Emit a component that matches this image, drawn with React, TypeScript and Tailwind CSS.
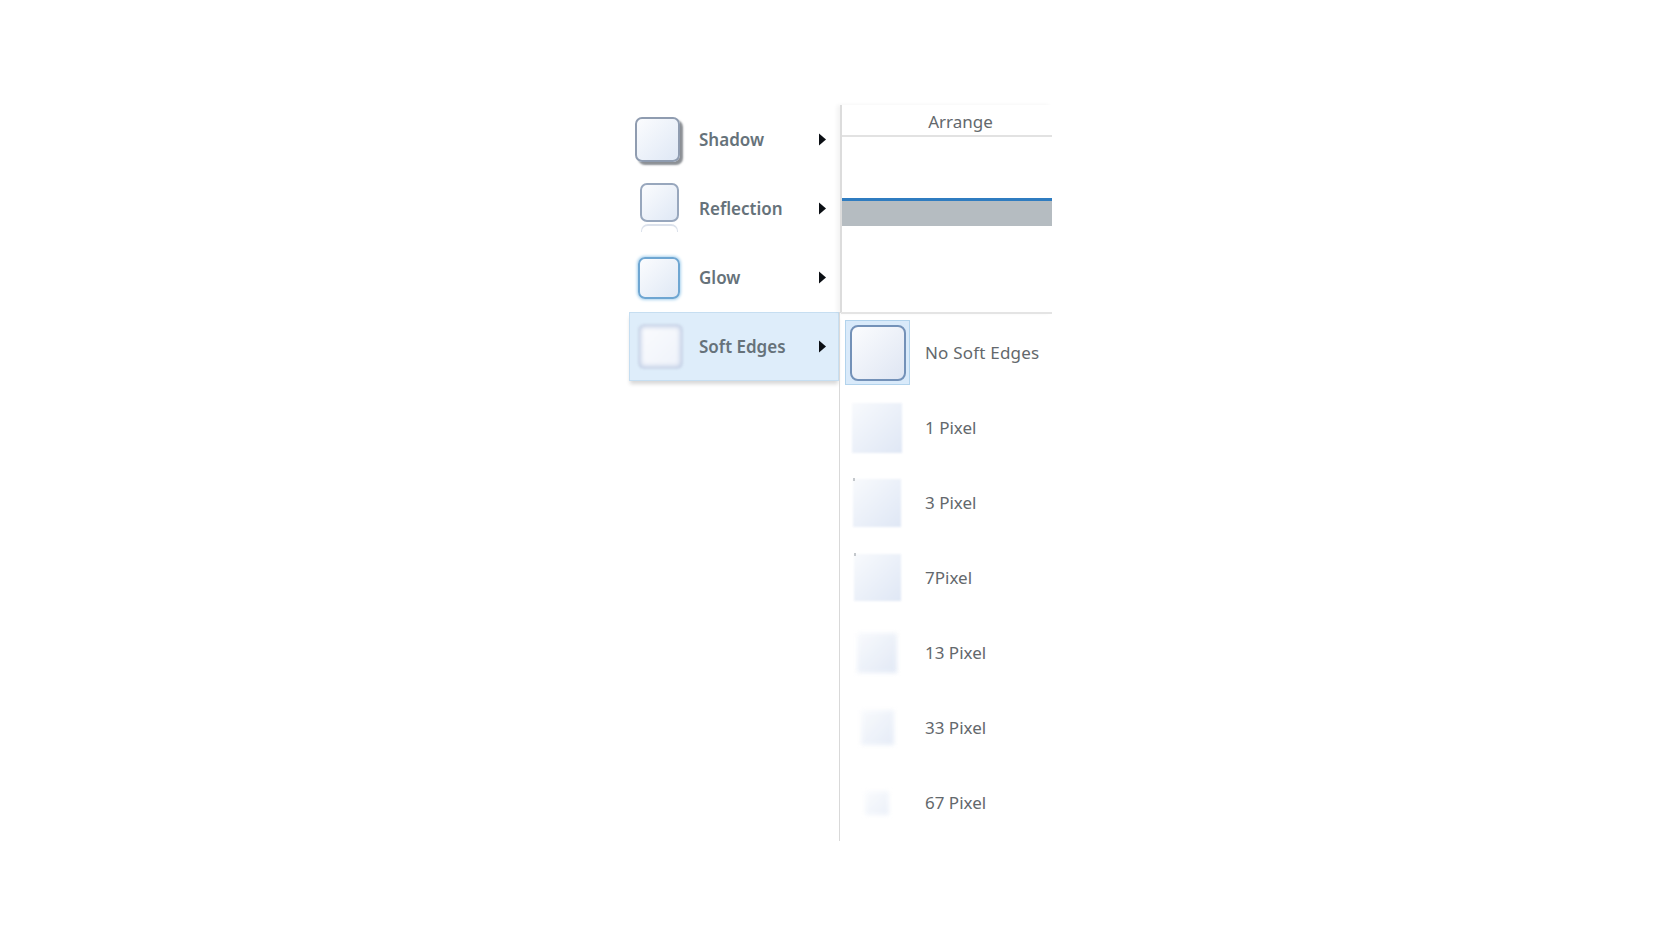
import React from 'react';

const fontStack = { fontFamily: '"Noto Sans", "Open Sans", sans-serif' };

const Arrow = () => (
    <svg width="9" height="13" viewBox="0 0 9 13" className="shrink-0">
        <path d="M1 0.5 L8 6.5 L1 12.5 Z" fill="#0b0f14" />
    </svg>
);

const MenuRow: React.FC<{ label: string; active?: boolean; children: React.ReactNode }> = ({ label, active, children }) => (
    <div
        className={`flex items-center h-[69px] ${
            active ? 'bg-[#deedfa] border border-[#c6def1] shadow-[0_4px_4px_-1px_rgba(0,0,0,0.16)]' : ''
        }`}>
        <div className={`w-[70px] h-full flex items-center justify-center shrink-0 ${active ? '-ml-px pr-[7px]' : 'pr-[10px]'}`}>{children}</div>
        <span className="text-[17px] font-semibold text-[#66727a] w-[119px] whitespace-nowrap">{label}</span>
        <Arrow />
    </div>
);

const softRows = [
    { label: '1 Pixel', size: 'w-[50px] h-[50px]', edge: 'blur-[1px]', speck: false },
    { label: '3 Pixel', size: 'w-[48px] h-[48px]', edge: 'blur-[1px]', speck: true },
    { label: '7Pixel', size: 'w-[47px] h-[47px]', edge: 'blur-[1px]', speck: true },
    { label: '13 Pixel', size: 'w-[40px] h-[40px]', edge: 'blur-[2px] opacity-90', speck: false },
    { label: '33 Pixel', size: 'w-[33px] h-[35px]', edge: 'blur-[2px] opacity-80', speck: false },
    { label: '67 Pixel', size: 'w-[24px] h-[24px]', edge: 'blur-[2px] opacity-60', speck: false },
];

export default function App() {
    return (
        <div className="w-[1680px] h-[946px] bg-white overflow-hidden pt-[105px] pl-[629px] flex text-[#63686c]" style={fontStack}>
            {/* left effects menu */}
            <div className="w-[210px] shrink-0">
                <MenuRow label="Shadow">
                    <div className="w-[45px] h-[45px] -ml-[4px] rounded-[7px] border-2 border-[#8f9cb0] bg-gradient-to-br from-[#fbfcfe] to-[#dfe8f5] shadow-[3px_3px_2px_#8b8f94]" />
                </MenuRow>
                <MenuRow label="Reflection">
                    <div className="flex flex-col items-center -mt-[2px]">
                        <div className="w-[39px] h-[39px] rounded-[7px] border-2 border-[#98a7bd] bg-gradient-to-br from-[#fbfcfe] to-[#dfe8f5]" />
                        <div className="w-[37px] h-[8px] mt-[2px] rounded-t-[7px] border-t-2 border-x border-[#d3dae6]/80 border-b-0" />
                    </div>
                </MenuRow>
                <MenuRow label="Glow">
                    <div className="w-[42px] h-[42px] rounded-[7px] border-2 border-[#6ea6d2] bg-gradient-to-br from-[#fbfcfe] to-[#dfe8f5] shadow-[0_0_3px_1px_#a9d2ee]" />
                </MenuRow>
                <MenuRow label="Soft Edges" active>
                    <div className="w-[45px] h-[45px] rounded-[6px] blur-[1px] bg-gradient-to-br from-[#fbfcfe] to-[#eef2fa] shadow-[inset_0_0_4px_3px_#c3d0e6]" />
                </MenuRow>
            </div>

            {/* right column */}
            <div className="w-[213px] shrink-0">
                <div className="ml-px h-[208px] border-l-2 border-[#dcdcdc] shadow-[-3px_0_4px_rgba(0,0,0,0.05)] flex flex-col">
                    <div className="h-[32px] border-b-2 border-[#e2e2e2] text-center text-[17px] leading-[34px] pl-[27px]">
                        Arrange
                    </div>
                    <div className="mt-[61px] h-[28px] bg-[#b5bcc1] border-t-[3px] border-[#2f7cc0]" />
                </div>
                <div className="h-[529px] border-l border-[#d9d9d9]">
                    <div className="h-[2px] bg-[#e4e4e4] ml-[1px] -mt-px mb-px" />
                    <div className="flex items-center h-[75px]">
                        <div className="ml-[5px] w-[65px] h-[65px] flex items-center justify-center bg-[#d9eafa] border border-[#b2d3ec] shrink-0">
                            <div className="w-[56px] h-[56px] rounded-[8px] border-2 border-[#7391b8] bg-gradient-to-br from-[#fbfcfe] to-[#dfe6f3]" />
                        </div>
                        <span className="ml-[15px] text-[17px] tracking-[0.2px] whitespace-nowrap">No Soft Edges</span>
                    </div>
                    {softRows.map((row) => (
                        <div key={row.label} className="flex items-center h-[75px]">
                            <div className="w-[74px] flex items-center justify-center shrink-0">
                                <div className="relative">
                                    <div className={`${row.size} ${row.edge} bg-gradient-to-br from-[#f8fafd] to-[#dfe7f5]`} />
                                    {row.speck && <div className="absolute -top-[1px] left-0 w-[2px] h-[3px] bg-[#c4c8cc]" />}
                                </div>
                            </div>
                            <span className="ml-[11px] text-[17px] whitespace-nowrap">{row.label}</span>
                        </div>
                    ))}
                </div>
            </div>
        </div>
    );
}
